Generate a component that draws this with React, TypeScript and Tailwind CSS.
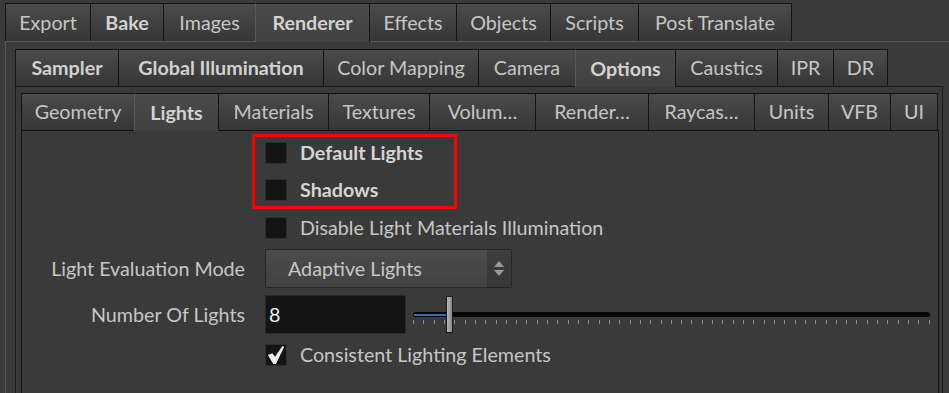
import React from "react";

type TabDef = { label: string; w: number; bold?: boolean; selected?: boolean };

const row1: TabDef[] = [
  { label: "Export", w: 86 },
  { label: "Bake", w: 74, bold: true },
  { label: "Images", w: 93 },
  { label: "Renderer", w: 115, bold: true, selected: true },
  { label: "Effects", w: 88 },
  { label: "Objects", w: 95 },
  { label: "Scripts", w: 89 },
  { label: "Post Translate", w: 154 },
];

const row2: TabDef[] = [
  { label: "Sampler", w: 104, bold: true },
  { label: "Global Illumination", w: 206, bold: true },
  { label: "Color Mapping", w: 156 },
  { label: "Camera", w: 98 },
  { label: "Options", w: 101, bold: true, selected: true },
  { label: "Caustics", w: 103 },
  { label: "IPR", w: 57 },
  { label: "DR", w: 55 },
];

const row3: TabDef[] = [
  { label: "Geometry", w: 114 },
  { label: "Lights", w: 85, bold: true, selected: true },
  { label: "Materials", w: 111 },
  { label: "Textures", w: 102 },
  { label: "Volum…", w: 107 },
  { label: "Render…", w: 114 },
  { label: "Raycas…", w: 107 },
  { label: "Units", w: 75 },
  { label: "VFB", w: 63 },
  { label: "UI", w: 48 },
];

function TabRow({ tabs, h }: { tabs: TabDef[]; h: number }) {
  return (
    <div className="flex items-end">
      {tabs.map((t, i) => (
        <div
          key={t.label}
          style={{ width: t.w, height: t.selected ? h + 1 : h }}
          className={`flex items-center justify-center border-t border-l border-r border-[#141414] ${
            i > 0 ? "-ml-px" : ""
          } ${
            t.selected
              ? "relative z-10 -mb-px bg-linear-to-b from-[#4a4a4a] to-[#414141] border-l-[#5a5a5a]"
              : "bg-linear-to-b from-[#4b4b4b] to-[#363636]"
          } ${t.bold ? "font-bold text-[#d2d2d2]" : "text-[#c6c6c6]"}`}
        >
          <span className="whitespace-nowrap">{t.label}</span>
        </div>
      ))}
    </div>
  );
}

function Box({ checked }: { checked?: boolean }) {
  return (
    <div className="w-[22px] h-[22px] shrink-0 bg-[#141414] border border-[#2f2f2f] flex items-center justify-center">
      {checked && (
        <svg width="22" height="22" viewBox="0 0 22 22">
          <polygon points="2,11 7,9 10,13 18,1 20,2 11,21 8,21" fill="#ececec" />
        </svg>
      )}
    </div>
  );
}

function Check({ label, bold, checked }: { label: string; bold?: boolean; checked?: boolean }) {
  return (
    <div className="flex items-center gap-[13px] h-[22px]">
      <Box checked={checked} />
      <span className={bold ? "font-bold text-[#d4d4d4]" : "text-[#c6c6c6]"}>{label}</span>
    </div>
  );
}

function Slider() {
  const ticks = Array.from({ length: 51 });
  return (
    <div className="relative w-[517px] h-[39px]">
      <div className="absolute left-0 right-0 top-[17px] h-[5px] bg-[#050505] rounded-sm" />
      <div className="absolute left-[1px] w-[33px] top-[19px] h-[2px] bg-[#2f6fb6]" />
      <div className="absolute left-0 right-0 top-[25px] flex justify-between">
        {ticks.map((_, i) => (
          <div key={i} className="w-px h-[4px] bg-[#8c8c8c]" />
        ))}
      </div>
      <div className="absolute left-[33px] top-[1px] w-[7px] h-[37px] border border-[#1a1a1a] bg-linear-to-r from-[#b8b8b8] to-[#8a8a8a]" />
    </div>
  );
}

export default function App() {
  return (
    <div className="w-[949px] h-[393px] overflow-hidden bg-[#3a3a3a] font-['Lato','Noto_Sans',sans-serif] text-[19.7px] leading-none">
      <div className="pl-[5px] pt-[3px]">
        <TabRow tabs={row1} h={38} />
        <div className="border-t border-l border-[#575757] pl-[9px] pt-[7px] h-[360px]">
          <TabRow tabs={row2} h={37} />
          <div className="w-[928px] h-[320px] border border-[#1a1a1a] pl-[5px] pt-[6px]">
            <TabRow tabs={row3} h={37} />
            <div className="w-[918px] h-[300px] border border-[#111111]">
              <div className="ml-[230px] mt-[3px] w-[205px] h-[75px] border-[3px] border-[#ff0000] pt-[5px] pl-[10px] flex flex-col gap-[15px]">
                <Check label="Default Lights" bold />
                <Check label="Shadows" bold />
              </div>

              <div className="ml-[243px] mt-[8px]">
                <Check label="Disable Light Materials Illumination" />
              </div>

              <div className="flex items-center gap-[20px] mt-[10px]">
                <div className="w-[223px] text-right text-[#c6c6c6]">Light Evaluation Mode</div>
                <div className="w-[247px] h-[39px] flex border border-[#262626] rounded-[2px] bg-linear-to-b from-[#4c4c4c] to-[#424242]">
                  <div className="flex-1 flex items-center pl-[22px] text-[#c8c8c8]">Adaptive Lights</div>
                  <div className="w-[24px] flex items-center justify-center bg-linear-to-b from-[#3e3e3e] to-[#363636]">
                    <svg width="10" height="16" viewBox="0 0 10 16">
                      <polygon points="5,0 10,6 0,6" fill="#9a9a9a" />
                      <polygon points="0,9 10,9 5,15" fill="#9a9a9a" />
                    </svg>
                  </div>
                </div>
              </div>

              <div className="flex items-center gap-[20px] mt-[7px]">
                <div className="w-[223px] text-right text-[#c6c6c6]">Number Of Lights</div>
                <div className="flex items-center gap-[7px]">
                  <div className="w-[141px] h-[39px] bg-[#141414] border border-[#2b2b2b] flex items-center pl-[3px] text-[#f0f0f0]">
                    8
                  </div>
                  <Slider />
                </div>
              </div>

              <div className="ml-[243px] mt-[10px]">
                <Check label="Consistent Lighting Elements" checked />
              </div>
            </div>
          </div>
        </div>
      </div>
    </div>
  );
}
